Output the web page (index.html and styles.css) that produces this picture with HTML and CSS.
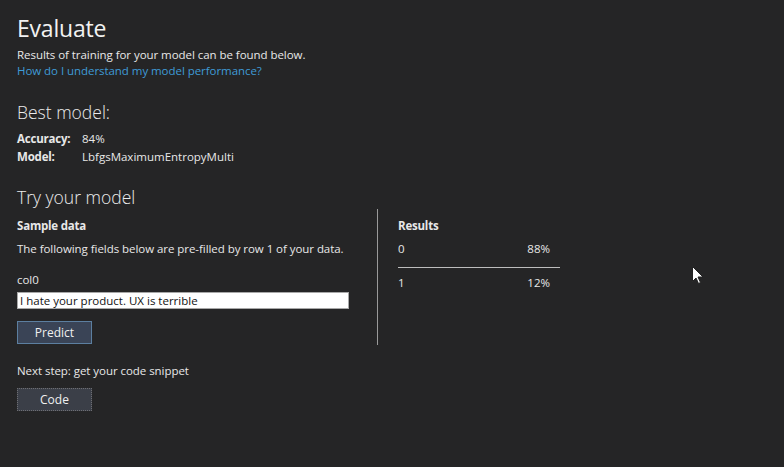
FILE: index.html
```html
<!DOCTYPE html>
<html>
<head>
<meta charset="utf-8">
<link rel="stylesheet" href="styles.css">
</head>
<body>
<main class="page">
  <h1 class="title">Evaluate</h1>
  <p class="text">Results of training for your model can be found below.</p>
  <a class="link" href="#">How do I understand my model performance?</a>

  <h2 class="section">Best model:</h2>
  <div class="facts">
    <span class="label">Accuracy:</span><span class="value">84%</span>
    <span class="label">Model:</span><span class="value">LbfgsMaximumEntropyMulti</span>
  </div>

  <h2 class="section try-title">Try your model</h2>
  <div class="try">
    <div class="sample">
      <div class="label">Sample data</div>
      <p class="text desc">The following fields below are pre-filled by row 1 of your data.</p>
      <div class="text field-label">col0</div>
      <input class="field" type="text" value="I hate your product. UX is terrible">
      <button class="btn btn-primary">Predict</button>
    </div>
    <div class="results">
      <div class="label">Results</div>
      <div class="row"><span>0</span><span>88%</span></div>
      <div class="row row-last"><span>1</span><span>12%</span></div>
    </div>
  </div>

  <p class="text next">Next step: get your code snippet</p>
  <button class="btn btn-secondary">Code</button>
</main>
<svg class="cursor" width="12" height="19" viewBox="0 0 12 19">
  <path d="M0.5 0.5 L0.5 15.5 L4 12 L6.5 17.5 L8.5 16.5 L6 11 L11 11 Z" fill="#ffffff" stroke="#222" stroke-width="1"/>
</svg>
</body>
</html>
```
FILE: styles.css
```css
html, body {
  margin: 0;
  padding: 0;
  background: #252526;
  height: 100%;
  overflow: hidden;
}
body {
  font-family: "Open Sans", "Noto Sans", sans-serif;
  color: #e8e8e8;
  font-size: 11.5px;
}
.page {
  padding: 12px 0 0 17px;
}
.title {
  margin: 0 0 3px 0;
  font-size: 23px;
  font-weight: 400;
  line-height: 32px;
  color: #f2f2f2;
  letter-spacing: -0.2px;
}
.text {
  margin: 0;
  font-size: 11.5px;
  line-height: 16px;
  letter-spacing: -0.05px;
}
.link {
  display: block;
  font-size: 11.5px;
  line-height: 16px;
  color: #3f9bd6;
  text-decoration: none;
  letter-spacing: -0.05px;
}
.section {
  margin: 0;
  font-size: 17.5px;
  font-weight: 300;
  line-height: 24px;
  color: #ececec;
  margin-top: 21px;
}
.facts {
  display: grid;
  grid-template-columns: 65px auto;
  row-gap: 1px;
  margin-top: 6px;
  font-size: 11.5px;
  line-height: 17px;
}
.label {
  font-weight: 700;
  font-size: 11.5px;
  letter-spacing: -0.2px;
}
.try-title {
  margin-top: 20px;
}
.try {
  display: flex;
  margin-top: 0;
}
.sample {
  width: 360px;
  padding-top: 9px;
  display: flex;
  flex-direction: column;
  align-items: flex-start;
}
.desc {
  margin-top: 8px;
}
.field-label {
  margin-top: 15px;
}
.field {
  margin: 4px 0 0 0;
  width: 332px;
  height: 17px;
  box-sizing: border-box;
  border: 1px solid #a8a8a8;
  background: #ffffff;
  color: #111;
  font-family: "Open Sans", "Noto Sans", sans-serif;
  font-size: 11.5px;
  padding: 0 2px;
  outline: none;
}
.btn {
  width: 75px;
  height: 23px;
  box-sizing: border-box;
  font-family: "Open Sans", "Noto Sans", sans-serif;
  font-size: 12px;
  color: #f0f0f0;
  padding: 0;
}
.btn-primary {
  margin-top: 12px;
  background: #3a4456;
  border: 1px solid #5c7fa0;
}
.btn-secondary {
  margin-top: 9px;
  background: #3b3f48;
  border: 1px dotted #6e6e72;
}
.results {
  border-left: 1px solid #9a9a9a;
  padding: 9px 0 0 20px;
  height: 136px;
  box-sizing: border-box;
}
.row {
  width: 162px;
  box-sizing: border-box;
  display: flex;
  justify-content: space-between;
  padding: 0 10px 10px 0;
  line-height: 16px;
  margin-top: 8px;
  border-bottom: 1px solid #bdbdbd;
}
.row-last {
  border-bottom: none;
  margin-top: 7px;
}
.next {
  margin-top: 18px;
}
.cursor {
  position: absolute;
  left: 692px;
  top: 266px;
}
```
